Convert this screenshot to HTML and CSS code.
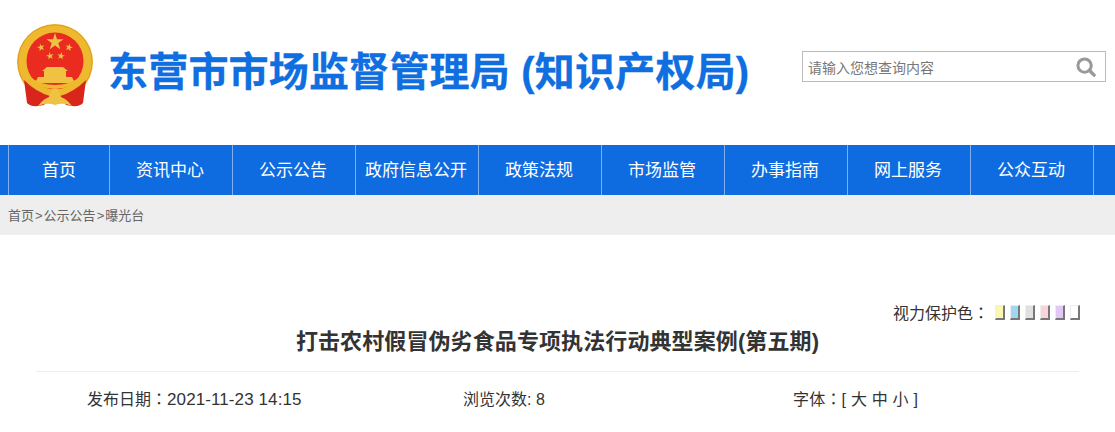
FILE: index.html
```html
<!DOCTYPE html>
<html lang="zh-CN">
<head>
  <meta charset="UTF-8" />
  <title>打击农村假冒伪劣食品专项执法行动典型案例(第五期)</title>
  <link rel="stylesheet" href="styles.css">
</head>
<body>

  <div class="top">
    <svg class="emblem" width="80" height="84" viewBox="0 0 80 84">
      <defs>
        <polygon id="star" points="0,-10 2.25,-3.09 9.51,-3.09 3.63,1.18 5.88,8.09 0,3.82 -5.88,8.09 -3.63,1.18 -9.51,-3.09 -2.25,-3.09"/>
      </defs>
      <circle cx="39" cy="38" r="38" fill="#eeb92e"/>
      <circle cx="39" cy="38" r="37" fill="none" stroke="#d99f2b" stroke-width="1"/>
      <circle cx="39" cy="37" r="28.5" fill="#e92b20"/>
      <g fill="#f0c244">
        <use href="#star" transform="translate(39 18) scale(.9)"/>
        <use href="#star" transform="translate(25 23.5) rotate(-15) scale(.4)"/>
        <use href="#star" transform="translate(53 23.5) rotate(15) scale(.4)"/>
        <use href="#star" transform="translate(34 32) rotate(-10) scale(.4)"/>
        <use href="#star" transform="translate(45 32) rotate(10) scale(.4)"/>
        <path d="M26 47 L31 43 H47 L52 47 H50 V53 H56 L59 59 H19 L22 53 H28 V47 Z"/>
      </g>
      <path d="M8 56 Q20 68 34 72 L28 81 Q15 84 11 79 Z" fill="#d9261c"/>
      <path d="M70 56 Q58 68 44 72 L50 81 Q63 84 67 79 Z" fill="#d9261c"/>
      <path d="M12 54 Q24 63 39 63 Q54 63 66 54" fill="none" stroke="#eeb92e" stroke-width="4"/>
      <path d="M33 73 L36 65 H42 L45 73 Z" fill="#f0c244"/>
      <path d="M22 82 Q30 71 39 73 Q48 71 56 82 Q47 78 39 81 Q31 78 22 82 Z" fill="#f0c244"/>
    </svg>
    <div class="site-name">东营市市场监督管理局 (知识产权局)</div>
    <div class="search">
      <span class="search-text">请输入您想查询内容</span>
      <svg width="20" height="20" viewBox="0 0 21 21">
        <circle cx="9" cy="9" r="7" fill="none" stroke="#999" stroke-width="3.2"/>
        <path d="M14 14 L19 19" stroke="#999" stroke-width="3.6" stroke-linecap="round"/>
      </svg>
    </div>
  </div>

  <div class="nav">
    <a class="first">首页</a>
    <a>资讯中心</a>
    <a>公示公告</a>
    <a>政府信息公开</a>
    <a>政策法规</a>
    <a>市场监管</a>
    <a>办事指南</a>
    <a>网上服务</a>
    <a>公众互动</a>
  </div>

  <div class="crumb">首页<span class="sep">&gt;</span>公示公告<span class="sep">&gt;</span>曝光台</div>

  <div class="eye">
    <span class="eye-label">视力保护色<span class="colon" lang="zh-TW">：</span></span>
    <i class="c1"></i><i class="c2"></i><i class="c3"></i><i class="c4"></i><i class="c5"></i><i class="c6"></i>
  </div>

  <h1 class="title">打击农村假冒伪劣食品专项执法行动典型案例(第五期)</h1>

  <div class="info">
    <span class="date">发布日期<span class="colon" lang="zh-TW">：</span><span class="num">2021-11-23 14:15</span></span>
    <span class="views">浏览次数: 8</span>
    <span class="size">字体<span class="colon" lang="zh-TW">：</span>[ 大 中 小 ]</span>
  </div>

</body>
</html>
```

FILE: styles.css
```css
body {
  margin: 0;
  font-family: "Liberation Sans", "Noto Sans CJK SC", sans-serif;
  color: #333;
  background: #fff;
  overflow: hidden;
}

.top {
  height: 145px;
  display: flex;
  align-items: flex-start;
  padding-left: 16px;
}

.emblem {
  margin-top: 24px;
}

.site-name {
  margin: 45px 0 0 12px;
  width: 681px;
  font-size: 40px;
  line-height: 54px;
  font-weight: bold;
  color: #0f6ee0;
  white-space: nowrap;
  letter-spacing: 0.2px;
  -webkit-text-stroke: 0.3px #0f6ee0;
}

.search {
  margin: 51px 0 0 13px;
  width: 288px;
  height: 29px;
  border: 1px solid #bbb;
  display: flex;
  align-items: center;
  justify-content: space-between;
  padding: 0 9px 0 5px;
}

.search-text {
  font-size: 14px;
  color: #777;
}

.nav {
  height: 50px;
  background: #0f6ce0;
  display: flex;
  padding-left: 8px;
}

.nav a {
  box-sizing: border-box;
  width: 123px;
  padding-right: 2px;
  border-left: 1px solid #7fb0ee;
  color: #fff;
  font-size: 17px;
  line-height: 51px;
  text-align: center;
  white-space: nowrap;
}

.nav a.first {
  width: 101px;
  padding-right: 0;
}

.nav a:last-child {
  width: 124px;
  border-right: 1px solid #7fb0ee;
}

.crumb {
  height: 40px;
  background: #eee;
  padding-left: 8px;
  font-size: 13px;
  line-height: 41px;
  color: #666;
}

.sep {
  padding: 0 1px;
}

.colon {
  font-family: "Noto Sans CJK TC", sans-serif;
}

.eye {
  margin-top: 66px;
  height: 22px;
  display: flex;
  justify-content: flex-end;
  align-items: center;
  padding-right: 35px;
}

.eye-label {
  font-size: 16px;
  margin-right: 1px;
}

.eye i {
  display: block;
  width: 7px;
  height: 12px;
  margin-left: 5px;
  border: 1px solid #eee;
  border-right: 2px solid #777;
  border-bottom: 2px solid #777;
}

.eye .c1 { background: #faf7b5; }
.eye .c2 { background: #9fd7f2; }
.eye .c3 { background: #e0e0e0; }
.eye .c4 { background: #fad2da; }
.eye .c5 { background: #e2c9f5; }
.eye .c6 { background: #fff; }

.title {
  margin: 0 36px;
  padding: 5px 0 15px;
  border-bottom: 1px solid #eee;
  font-size: 22px;
  line-height: 28px;
  font-weight: bold;
  text-align: center;
  letter-spacing: 0.1px;
}

.info {
  display: flex;
  align-items: baseline;
  font-size: 16px;
  line-height: 24px;
  padding-top: 14px;
}

.date {
  margin-left: 87px;
  width: 376px;
}

.num {
  font-size: 17px;
  letter-spacing: 0.1px;
}

.views {
  width: 330px;
}

.size {
  letter-spacing: 0.2px;
}
```
